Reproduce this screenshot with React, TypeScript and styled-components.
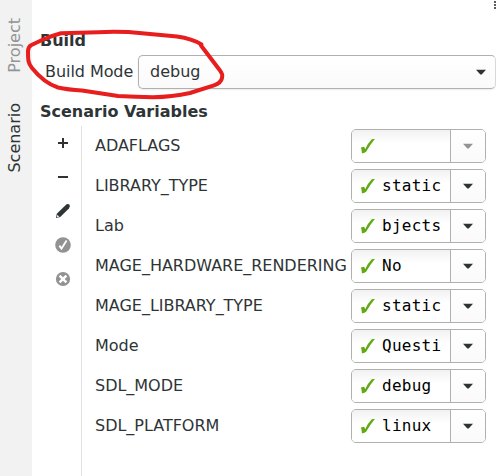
import React from "react";
import styled, { createGlobalStyle } from "styled-components";

const Global = createGlobalStyle`
  * { box-sizing: border-box; }
  body { margin: 0; background: #fff; overflow: hidden; }
`;

const Window = styled.div`
  position: relative;
  display: flex;
  width: 496px;
  height: 476px;
  overflow: hidden;
  background: #fff;
  color: #2e3436;
  font: 16px/20px "DejaVu Sans", sans-serif;
`;

const TabRail = styled.nav`
  display: flex;
  flex-direction: column;
  align-items: center;
  gap: 30px;
  width: 32px;
  flex: none;
  padding-top: 18px;
  background: #f2f2f2;
`;

const Tab = styled.div<{ $active?: boolean }>`
  writing-mode: vertical-rl;
  transform: rotate(180deg);
  width: 20px;
  margin-right: 3px;
  white-space: nowrap;
  color: ${(p) => (p.$active ? "#2e3436" : "#929595")};
`;

const Panel = styled.main`
  display: flex;
  flex-direction: column;
  flex: 1;
  min-width: 0;
  padding: 31px 0 0 8px;
`;

const Heading = styled.h2`
  margin: 0;
  font-size: 16px;
  line-height: 20px;
  font-weight: 700;
`;

const ModeRow = styled.div`
  display: flex;
  align-items: center;
  height: 34px;
  margin: 4px 0 13px;
  padding-left: 5px;
`;

const ModeLabel = styled.span`
  width: 93px;
  flex: none;
  white-space: nowrap;
  letter-spacing: -0.06px;
`;

const ModeSelect = styled.div`
  display: flex;
  align-items: center;
  justify-content: space-between;
  width: 358px;
  flex: none;
  height: 34px;
  padding: 0 9px 0 11px;
  border: 1px solid #b0b0b0;
  border-right-color: #d8d8d8;
  border-radius: 5px;
  background: linear-gradient(#fff, #fafafa);
  box-shadow: 0 1px 2px rgba(0, 0, 0, 0.08);
`;

const Body = styled.div`
  display: flex;
  flex: 1;
  margin-top: 4px;
`;

const Tools = styled.div`
  display: flex;
  flex-direction: column;
  align-items: center;
  width: 42px;
  flex: none;
  padding-left: 4px;
  border-right: 1px solid #e1e1e1;
`;

const Tool = styled.div`
  display: flex;
  align-items: center;
  justify-content: center;
  width: 34px;
  height: 34px;
  flex: none;
`;

const Variables = styled.div`
  display: flex;
  flex-direction: column;
  gap: 6px;
  padding-left: 13px;
  padding-top: 3px;
`;

const Row = styled.div`
  display: flex;
  align-items: center;
  height: 34px;
`;

const Name = styled.span`
  width: 256px;
  flex: none;
  white-space: nowrap;
  letter-spacing: -0.02px;
`;

const Combo = styled.div`
  display: flex;
  width: 135px;
  height: 34px;
  border: 1px solid #b0b0b0;
  border-radius: 5px;
  overflow: hidden;
  background: #fff;
`;

const Entry = styled.div`
  display: flex;
  align-items: center;
  gap: 6px;
  width: 98px;
  padding-left: 8px;
  background: linear-gradient(#f1f1f1, #fff 13px);
  color: #000;
  font-family: "DejaVu Sans Mono", monospace;
  letter-spacing: 0.25px;
`;

const Drop = styled.div`
  display: flex;
  align-items: center;
  justify-content: center;
  width: 35px;
  border-left: 1px solid #b0b0b0;
  background: linear-gradient(#fff, #fafafa);
`;

const MenuGrip = styled.svg`
  position: absolute;
  right: 0;
  top: 0;
`;

const Annotation = styled.svg`
  position: absolute;
  left: 0;
  top: 0;
  pointer-events: none;
`;

const Arrow = ({ muted = false }: { muted?: boolean }) => (
  <svg width="10" height="6" viewBox="0 0 10 6">
    <path d="M0 .7h10L5.7 5.4H4.3z" fill={muted ? "#929595" : "#2e3436"} />
  </svg>
);

const Tick = () => (
  <svg width="16" height="18" viewBox="0 0 16 18">
    <path d="M.9 10.6 4 9.8Q5 10.9 5.2 12.2 8 6 11.8 2.3L15 1.8Q10 8 6.1 14.8 4.3 16.6 1.9 16.2 1.9 13.5.9 10.6z" fill="#62a916" />
  </svg>
);

const variables = [
  { name: "ADAFLAGS", value: "", muted: true },
  { name: "LIBRARY_TYPE", value: "static" },
  { name: "Lab", value: "bjects" },
  { name: "MAGE_HARDWARE_RENDERING", value: "No" },
  { name: "MAGE_LIBRARY_TYPE", value: "static" },
  { name: "Mode", value: "Questi" },
  { name: "SDL_MODE", value: "debug" },
  { name: "SDL_PLATFORM", value: "linux" },
];

export default function App() {
  return (
    <>
      <Global />
      <Window>
        <TabRail>
          <Tab>Project</Tab>
          <Tab $active>Scenario</Tab>
        </TabRail>
        <Panel>
          <Heading>Build</Heading>
          <ModeRow>
            <ModeLabel>Build Mode</ModeLabel>
            <ModeSelect>
              <span>debug</span>
              <Arrow />
            </ModeSelect>
          </ModeRow>
          <Heading>Scenario Variables</Heading>
          <Body>
            <Tools>
              <Tool>
                <svg width="16" height="16"><path d="M3 7h10v2H3zM7 3h2v10H7z" fill="#2e3436" /></svg>
              </Tool>
              <Tool>
                <svg width="16" height="16"><path d="M3 7h10v2H3z" fill="#2e3436" /></svg>
              </Tool>
              <Tool>
                <svg width="16" height="16">
                  <path d="M1 15 1.8 10.8 10.5 2.2q2-1.8 3.9-.6 1.3 1.8-.5 3.8L5.2 14.1z" fill="#2e3436" />
                  <path d="m2.4 11.7 2 2-2.1.6-.5-.5z" fill="#e6e7e7" />
                </svg>
              </Tool>
              <Tool>
                <svg width="16" height="16">
                  <circle cx="8" cy="8" r="7.8" fill="#929292" />
                  <path d="m4.3 8.6 2.2 3L11.6 3.6" fill="none" stroke="#fff" strokeWidth="1.8" />
                </svg>
              </Tool>
              <Tool>
                <svg width="16" height="16">
                  <circle cx="8" cy="8" r="7.1" fill="#929292" />
                  <path d="m4.6 4.6 6.8 6.8m0-6.8-6.8 6.8" stroke="#fff" strokeWidth="2.5" />
                </svg>
              </Tool>
            </Tools>
            <Variables>
              {variables.map((v) => (
                <Row key={v.name}>
                  <Name>{v.name}</Name>
                  <Combo>
                    <Entry><Tick />{v.value}</Entry>
                    <Drop><Arrow muted={v.muted} /></Drop>
                  </Combo>
                </Row>
              ))}
            </Variables>
          </Body>
        </Panel>
        <MenuGrip width="2" height="10">
          <path d="M0 1h2v2H0zM0 4h2v2H0zM0 7h2v2H0z" fill="#585c5e" />
        </MenuGrip>
        <Annotation width="496" height="476">
          <path
            d="M201.5 44.5C196 41 188 38 177 36.5L142 33.2Q122 31.2 98 32.2L61 33.3Q51 36 42 40L31 45.3Q28.3 47 28 51C28 60 28 63 32 68Q44 83 58 87.5Q68 89.7 82 90.5L118 96Q136 96.7 153 97.2Q172 97 190 93L214 85.3Q221 83 222 78Q223 74 220 70.5L201 45.5"
            fill="none"
            stroke="#e81e1e"
            strokeWidth="4"
            strokeLinejoin="round"
            strokeLinecap="round"
          />
        </Annotation>
      </Window>
    </>
  );
}
